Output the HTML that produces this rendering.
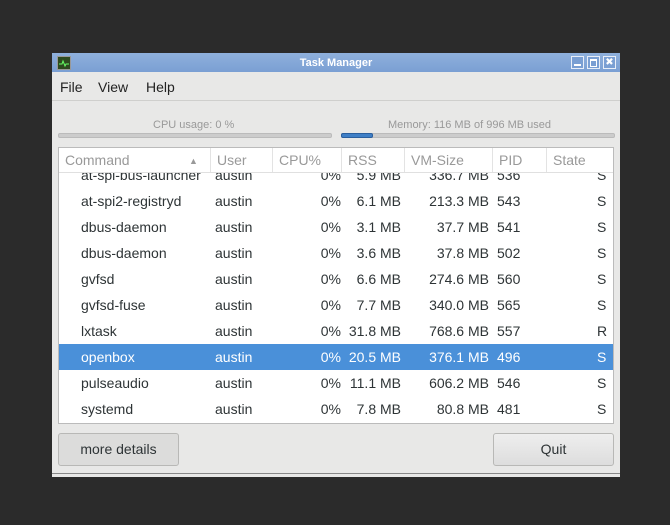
<!DOCTYPE html>
<html><head><style>
body{margin:0;width:670px;height:525px;background:#2b2b2b;position:relative;overflow:hidden;font-family:"Liberation Sans","DejaVu Sans",sans-serif;}
.win{position:absolute;left:52px;top:53px;width:568px;height:424px;background:#e8e8e7;}
.title{position:absolute;left:0;top:0;width:568px;height:19px;background:linear-gradient(#8fb0dc,#7a9fd3);color:#fff;font-weight:bold;font-size:11px;text-align:center;line-height:19px;}
.ico{position:absolute;left:5px;top:3px;width:12px;height:12px;background:#2d4a20;border:1px solid #999;}
.wb{position:absolute;top:3px;width:11px;height:11px;border:1px solid #e8eef8;background:#7a9fd3;}
.menu{position:absolute;top:26px;font-size:14px;color:#222;}
.t{position:absolute;font-size:14px;color:#2e3436;white-space:nowrap;}
.abs{position:absolute;}
</style></head><body>
<div class="win">
<div class="title"><div class="ico"><svg width="12" height="12"><path d="M1 7h3l1-3 2 5 1-2h3" stroke="#6f6" fill="none"/></svg></div><span style="position:relative;top:1px">Task Manager</span>
<div class="wb" style="left:519px"><div class="abs" style="left:2px;top:7px;width:7px;height:2px;background:#fff"></div></div>
<div class="wb" style="left:535px"><div class="abs" style="left:2px;top:2px;width:5px;height:5px;border:1px solid #fff;border-top-width:2px"></div></div>
<div class="wb" style="left:551px;color:#fff;font-size:10px;line-height:11px">✖</div>
</div>
<div class="menu" style="left:8px">File</div>
<div class="menu" style="left:46px">View</div>
<div class="menu" style="left:94px">Help</div>
<div class="abs" style="left:0;top:47px;width:568px;height:1px;background:#cfcfcd"></div>
<div class="t" style="left:101px;top:66px;font-size:11px;color:#999">CPU usage: 0 %</div>
<div class="t" style="left:336px;top:66px;font-size:11px;color:#999">Memory: 116 MB of 996 MB used</div>
<div class="abs" style="left:6px;top:80px;width:272px;height:3px;background:#ccc;border:1px solid #bbb;border-radius:2px"></div>
<div class="abs" style="left:289px;top:80px;width:272px;height:3px;background:#ccc;border:1px solid #bbb;border-radius:2px"></div>
<div class="abs" style="left:289px;top:80px;width:30px;height:3px;background:#3f7fc6;border:1px solid #2a5f9e;border-radius:2px"></div>
<div class="abs" style="left:6px;top:94px;width:554px;height:275px;background:#fff;border:1px solid #bbb;overflow:hidden">
 <div style="position:absolute;left:0;top:0;width:554px;height:24px;background:#fff;border-bottom:1px solid #e0e0e0;z-index:2">
  <div class="t" style="left:6px;top:4px;color:#999">Command</div>
  <div class="t" style="left:130px;top:8px;color:#999;font-size:9px">▲</div>
  <div class="t" style="left:158px;top:4px;color:#999">User</div>
  <div class="t" style="left:220px;top:4px;color:#999">CPU%</div>
  <div class="t" style="left:289px;top:4px;color:#999">RSS</div>
  <div class="t" style="left:352px;top:4px;color:#999">VM-Size</div>
  <div class="t" style="left:440px;top:4px;color:#999">PID</div>
  <div class="t" style="left:494px;top:4px;color:#999">State</div>
  <div class="abs" style="left:151px;top:0;width:1px;height:24px;background:#e3e3e3"></div>
  <div class="abs" style="left:213px;top:0;width:1px;height:24px;background:#e3e3e3"></div>
  <div class="abs" style="left:282px;top:0;width:1px;height:24px;background:#e3e3e3"></div>
  <div class="abs" style="left:345px;top:0;width:1px;height:24px;background:#e3e3e3"></div>
  <div class="abs" style="left:433px;top:0;width:1px;height:24px;background:#e3e3e3"></div>
  <div class="abs" style="left:487px;top:0;width:1px;height:24px;background:#e3e3e3"></div>
 </div>
 <div id="rows"></div>
</div>
<div class="abs" style="left:6px;top:380px;width:119px;height:31px;background:#dcdcdb;border:1px solid #b8b8b6;border-radius:3px;font-size:14px;color:#2e3436;text-align:center;line-height:31px">more details</div>
<div class="abs" style="left:441px;top:380px;width:119px;height:31px;background:linear-gradient(#eee,#ddd);border:1px solid #b8b8b6;border-radius:3px;font-size:14px;color:#2e3436;text-align:center;line-height:31px">Quit</div>
<div class="abs" style="left:0;top:420px;width:568px;height:1px;background:#888"></div>
</div>
<script>
var d=[["at-spi-bus-launcher","5.9 MB","336.7 MB","536","S"],["at-spi2-registryd","6.1 MB","213.3 MB","543","S"],["dbus-daemon","3.1 MB","37.7 MB","541","S"],["dbus-daemon","3.6 MB","37.8 MB","502","S"],["gvfsd","6.6 MB","274.6 MB","560","S"],["gvfsd-fuse","7.7 MB","340.0 MB","565","S"],["lxtask","31.8 MB","768.6 MB","557","R"],["openbox","20.5 MB","376.1 MB","496","S"],["pulseaudio","11.1 MB","606.2 MB","546","S"],["systemd","7.8 MB","80.8 MB","481","S"]];
var h="";d.forEach(function(r,i){var top=14+26*i;var sel=i==7;var c=sel?"#fff":"#2e3436";
h+='<div style="position:absolute;left:0;top:'+top+'px;width:554px;height:26px;'+(sel?'background:#4a90d9;':'')+'color:'+c+';font-size:14px;line-height:26px;white-space:nowrap">'+
'<span class="abs" style="left:22px">'+r[0]+'</span><span class="abs" style="left:156px">austin</span>'+
'<span class="abs" style="right:272px">0%</span><span class="abs" style="right:212px">'+r[1]+'</span><span class="abs" style="right:124px">'+r[2]+'</span>'+
'<span class="abs" style="left:438px">'+r[3]+'</span><span class="abs" style="left:538px">'+r[4]+'</span></div>';});
document.getElementById("rows").innerHTML=h;
</script>
</body></html>
